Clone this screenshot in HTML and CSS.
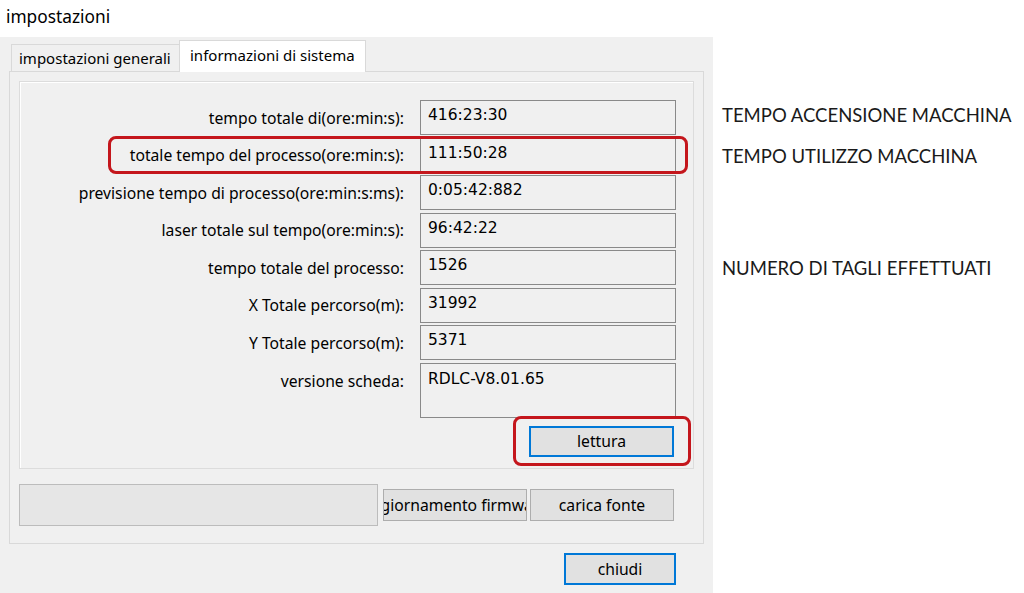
FILE: index.html
```html
<!DOCTYPE html>
<html lang="it">
<head>
  <meta charset="UTF-8" />
  <meta name="viewport" content="width=device-width, initial-scale=1.0"/>
  <title>impostazioni</title>
  <link rel="stylesheet" href="styles.css">
</head>
<body>

<div class="page">

  <div class="window">
    <div class="titlebar">impostazioni</div>

    <div class="dialog">

      <div class="tabs">
        <div class="tab">impostazioni generali</div>
        <div class="tab active">informazioni di sistema</div>
      </div>

      <div class="tabpage">

        <div class="group">
          <div class="rows">
            <div class="row">
              <label>tempo totale di(ore:min:s):</label>
              <div class="field">416:23:30</div>
            </div>
            <div class="row">
              <label>totale tempo del processo(ore:min:s):</label>
              <div class="field">111:50:28</div>
              <span class="mark mark-row"></span>
            </div>
            <div class="row">
              <label>previsione tempo di processo(ore:min:s:ms):</label>
              <div class="field">0:05:42:882</div>
            </div>
            <div class="row">
              <label>laser totale sul tempo(ore:min:s):</label>
              <div class="field">96:42:22</div>
            </div>
            <div class="row">
              <label>tempo totale del processo:</label>
              <div class="field">1526</div>
            </div>
            <div class="row">
              <label>X Totale percorso(m):</label>
              <div class="field">31992</div>
            </div>
            <div class="row">
              <label>Y Totale percorso(m):</label>
              <div class="field">5371</div>
            </div>
            <div class="row tall">
              <label>versione scheda:</label>
              <div class="field multi">RDLC-V8.01.65</div>
            </div>
          </div>

          <div class="group-foot">
            <span class="marked">
              <button class="btn focused read-btn">lettura</button>
              <span class="mark mark-btn"></span>
            </span>
          </div>
        </div>

        <div class="actions">
          <div class="progress"></div>
          <button class="btn act-btn"><span>aggiornamento firmware</span></button>
          <button class="btn act-btn"><span>carica fonte</span></button>
        </div>

      </div>

      <div class="footer">
        <button class="btn focused close-btn">chiudi</button>
      </div>

    </div>
  </div>

  <!-- note a lato -->
  <div class="notes">
    <p class="note n1">TEMPO ACCENSIONE MACCHINA</p>
    <p class="note n2">TEMPO UTILIZZO MACCHINA</p>
    <p class="note n3">NUMERO DI TAGLI EFFETTUATI</p>
  </div>

</div>

</body>
</html>
```

FILE: styles.css
```css
html, body {
  margin: 0;
  height: 100%;
  background: #fff;
}

body {
  font-family: 'Noto Sans', 'Open Sans', sans-serif;
  font-size: 15.7px;
  color: #000;
}

.page {
  display: flex;
  height: 593px;
  overflow: hidden;
}

.window {
  width: 713px;
  display: flex;
  flex-direction: column;
}

.titlebar {
  height: 37px;
  line-height: 34px;
  padding-left: 6px;
  font-size: 17.3px;
  background: #fff;
}

.dialog {
  flex: 1;
  background: #f0f0f0;
  padding: 0 9px;
}

/* tabs */
.tabs {
  display: flex;
  align-items: flex-end;
  padding: 3px 0 0 2px;
  margin-bottom: -1px;
}

.tab {
  box-sizing: border-box;
  width: 170px;
  height: 27px;
  margin-bottom: 1px;
  padding-left: 7px;
  line-height: 27px;
  font-size: 15px;
  background: #f0f0f0;
  border: 1px solid #d9d9d9;
  border-bottom: none;
  white-space: nowrap;
}

.tab.active {
  position: relative;
  z-index: 1;
  width: 187px;
  height: 32px;
  margin: 0 0 0 -2px;
  padding-left: 10px;
  line-height: 28px;
  background: #fff;
}

.tabpage {
  border: 1px solid #d9d9d9;
  padding: 9px 9px 17px 9px;
}

/* group box */
.group {
  border: 1px solid #dcdcdc;
  box-shadow: inset 1px 1px 0 #fff;
  padding: 18px 17px 11px 0;
}

.rows {
  display: flex;
  flex-direction: column;
  gap: 2.5px;
}

.row {
  position: relative;
  display: flex;
  align-items: center;
  gap: 16px;
  height: 35px;
}

.row.tall {
  height: 55px;
  align-items: flex-start;
}

.row label {
  flex: 1;
  text-align: right;
  white-space: nowrap;
}

.row.tall label {
  padding-top: 7px;
}

.field {
  box-sizing: border-box;
  width: 256px;
  height: 35px;
  padding: 5px 0 0 7px;
  border: 1px solid #898989;
  background: #f0f0f0;
  font-family: 'DejaVu Sans', 'Noto Sans', sans-serif;
  font-size: 15.5px;
}

.field.multi {
  height: 55px;
  padding-top: 6px;
}

.group-foot {
  display: flex;
  justify-content: flex-end;
  margin-top: 8px;
  padding-right: 2px;
}

/* buttons */
.btn {
  box-sizing: border-box;
  font: inherit;
  color: #000;
  background: #e1e1e1;
  border: 1px solid #adadad;
  padding: 0;
  margin: 0;
}

.btn.focused {
  border: 2px solid #0078d7;
}

.read-btn {
  width: 145px;
  height: 31px;
}

.actions {
  display: flex;
  align-items: center;
  margin-top: 15px;
}

.progress {
  box-sizing: border-box;
  width: 359px;
  height: 42px;
  background: #e6e6e6;
  border: 1px solid #bcbcbc;
  margin-right: 5px;
}

.act-btn {
  width: 144px;
  height: 32px;
  display: flex;
  align-items: center;
  justify-content: center;
  overflow: hidden;
  white-space: nowrap;
  margin-right: 3px;
}

.footer {
  display: flex;
  justify-content: flex-end;
  padding: 9px 28px 0 0;
}

.close-btn {
  width: 112px;
  height: 32px;
}

/* red annotation frames */
.marked {
  position: relative;
  display: inline-block;
}

.mark {
  position: absolute;
  border: 3px solid #c4161c;
  border-radius: 8px;
  pointer-events: none;
}

.mark-row {
  left: 88px;
  right: -12px;
  top: -2px;
  bottom: -1px;
}

.mark-btn {
  left: -16px;
  right: -17px;
  top: -10px;
  bottom: -9px;
}

/* side notes */
.notes {
  padding: 104px 0 0 9px;
  font-family: 'Lato', 'Noto Sans', sans-serif;
  font-size: 18.5px;
  color: #1a1a1a;
}

.note {
  margin: 0;
  line-height: 22px;
  white-space: nowrap;
}

.n2 {
  margin-top: 19px;
}

.n3 {
  margin-top: 90px;
}
```
